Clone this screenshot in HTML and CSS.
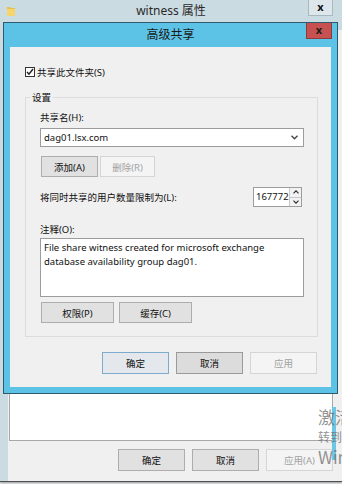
FILE: index.html
```html
<!DOCTYPE html>
<html lang="zh-CN">
<head>
  <meta charset="UTF-8">
  <title>witness 属性 - 高级共享</title>
  <link rel="stylesheet" href="styles.css">
</head>
<body>
  <div class="desktop">
    <!-- parent window: witness properties -->
    <div class="props">
      <div class="props-title">
        <svg class="folder-icon" width="8" height="10" viewBox="0 0 8 10">
          <path d="M0 1h3l1 1h4v8H0z" fill="#e8c04a"/>
          <path d="M0 3h8v7H0z" fill="#f5d66e"/>
        </svg>
        <span>witness 属性</span>
        <div class="props-close">x</div>
      </div>
      <div class="props-body">
        <div class="list-box"></div>
        <div class="btn-row">
          <button class="btn">确定</button>
          <button class="btn">取消</button>
          <button class="btn disabled">应用(A)</button>
        </div>
      </div>
    </div>

    <div class="side-strip"></div>

    <!-- advanced sharing dialog -->
    <div class="share-dlg">
      <div class="dlg-title">高级共享</div>
      <div class="dlg-close">x</div>
      <div class="dlg-client">
        <div class="share-check">
          <span class="checkbox">
            <svg width="8" height="8" viewBox="0 0 8 8"><path d="M1 4l2 2.2L7 1" fill="none" stroke="#222" stroke-width="1.5"/></svg>
          </span>
          <span>共享此文件夹(S)</span>
        </div>

        <div class="group">
          <span class="group-label">设置</span>
          <div class="field-label">共享名(H):</div>
          <div class="combo">
            <span>dag01.lsx.com</span>
            <svg width="7" height="5" viewBox="0 0 7 5"><path d="M0.5 0.8l3 3 3-3" fill="none" stroke="#444" stroke-width="1.3"/></svg>
          </div>
          <div class="small-btns">
            <button class="btn add-btn">添加(A)</button>
            <button class="btn add-btn disabled">删除(R)</button>
          </div>
          <div class="limit-row">
            <span>将同时共享的用户数量限制为(L):</span>
            <div class="spinner">
              <span class="spin-value">167772</span>
              <div class="spin-arrows">
                <span><svg width="6" height="4" viewBox="0 0 6 4"><path d="M0.5 3.3l2.5-2.5 2.5 2.5" fill="none" stroke="#333" stroke-width="1.2"/></svg></span>
                <span><svg width="6" height="4" viewBox="0 0 6 4"><path d="M0.5 0.7l2.5 2.5 2.5-2.5" fill="none" stroke="#333" stroke-width="1.2"/></svg></span>
              </div>
            </div>
          </div>
          <div class="field-label note-label">注释(O):</div>
          <div class="note-box">File share witness created for microsoft exchange database availability group dag01.</div>
          <div class="small-btns">
            <button class="btn perm-btn">权限(P)</button>
            <button class="btn perm-btn">缓存(C)</button>
          </div>
        </div>

        <div class="btn-row dlg-btns">
          <button class="btn default">确定</button>
          <button class="btn pressed">取消</button>
          <button class="btn disabled">应用</button>
        </div>
      </div>
    </div>

    <div class="watermark">
      <div class="wm-big">激活 Windows</div>
      <div class="wm-small">转到“系统”以激活 Windows。</div>
      <div class="wm-big">Windows</div>
    </div>
  </div>
</body>
</html>
```

FILE: styles.css
```css
body {
  margin: 0;
  background: #e9eef0;
  font-family: "Noto Sans", "Noto Sans CJK SC", sans-serif;
  font-size: 9.5px;
  color: #111;
  overflow: hidden;
}
.desktop {
  position: relative;
  width: 342px;
  height: 484px;
  overflow: hidden;
}
.props {
  width: 342px;
  height: 481px;
  background: #cbdbe2;
  border-bottom: 1px solid #4e4e4e;
  box-shadow: 0 1px 2px rgba(0,0,0,0.35);
}
.props-title {
  position: relative;
  height: 30px;
  text-align: center;
  font-size: 12px;
  line-height: 22px;
  color: #2a2a2a;
}
.folder-icon {
  position: absolute;
  left: 7px;
  top: 6px;
}
.props-close {
  position: absolute;
  right: 9px;
  top: 0;
  width: 25px;
  height: 16px;
  box-sizing: border-box;
  border: 1px solid #a9b7be;
  border-top: none;
  background: #dde6ea;
  font-weight: bold;
  font-size: 11px;
  line-height: 14px;
  color: #111;
}
.props-body {
  margin-left: 8px;
  width: 334px;
  height: 451px;
  box-sizing: border-box;
  background: #f0f0f0;
  padding: 10px 9px 0 1px;
}
.list-box {
  height: 401px;
  box-sizing: border-box;
  background: #fff;
  border: 1px solid #a8a8a8;
}
.btn-row {
  display: flex;
  justify-content: flex-end;
  gap: 7px;
  margin-top: 8px;
}
.btn {
  width: 67px;
  height: 22px;
  padding: 0;
  box-sizing: border-box;
  border: 1px solid #adadad;
  background: #e1e1e1;
  font-family: inherit;
  font-size: 9.5px;
  color: #111;
}
.btn.disabled {
  background: #f4f4f4;
  border-color: #d5d5d5;
  color: #a2a2a2;
}
.btn.default {
  border-color: #7eaacb;
  background: #e4e8ec;
}
.btn.pressed {
  border-color: #9a9a9a;
  background: #dcdcdc;
}
.side-strip {
  position: absolute;
  left: 332px;
  top: 407px;
  width: 4px;
  height: 53px;
  background: #6cc6e4;
}

/* advanced sharing dialog */
.share-dlg {
  position: absolute;
  left: 3px;
  top: 22px;
  width: 321px;
  padding: 0 6px 6px;
  border: 1px solid #2f5a6e;
  background: #5dc3e6;
}
.dlg-title {
  height: 24px;
  line-height: 24px;
  text-align: center;
  font-size: 12px;
  color: #1a1a1a;
}
.dlg-close {
  position: absolute;
  right: 5px;
  top: 0;
  width: 26px;
  height: 16px;
  box-sizing: border-box;
  border: 1px solid #8e3b3b;
  border-top: none;
  background: #c75050;
  text-align: center;
  font-weight: bold;
  font-size: 11px;
  line-height: 14px;
  color: #1c1c1c;
}
.dlg-client {
  height: 340px;
  box-sizing: border-box;
  background: #f0f0f0;
  padding: 18px 13px 13px 15px;
}
.share-check {
  display: flex;
  align-items: center;
  gap: 2px;
  height: 14px;
}
.checkbox {
  width: 10px;
  height: 10px;
  box-sizing: border-box;
  border: 1px solid #333;
  background: #fff;
  display: flex;
  align-items: center;
  justify-content: center;
}
.group {
  position: relative;
  margin-top: 18px;
  border: 1px solid #dcdcdc;
  padding: 13px 13px 13px 14px;
}
.group-label {
  position: absolute;
  left: 4px;
  top: -7px;
  padding: 0 2px;
  background: #f0f0f0;
  line-height: 14px;
}
.field-label {
  height: 14px;
  line-height: 14px;
}
.combo {
  margin-top: 3px;
  height: 19px;
  box-sizing: border-box;
  border: 1px solid #9c9c9c;
  background: #fff;
  display: flex;
  align-items: center;
  justify-content: space-between;
  padding: 0 5px 0 3px;
}
.small-btns {
  display: flex;
  gap: 2px;
  margin-top: 9px;
  padding-left: 1px;
}
.add-btn {
  width: 57px;
  height: 21px;
}
.add-btn.disabled {
  width: 55px;
}
.perm-btn {
  width: 73px;
  height: 21px;
}
.small-btns .perm-btn + .perm-btn {
  margin-left: 3px;
}
.limit-row {
  margin-top: 10px;
  height: 20px;
  display: flex;
  align-items: center;
  justify-content: space-between;
}
.spinner {
  width: 49px;
  height: 20px;
  margin-right: 2px;
  box-sizing: border-box;
  border: 1px solid #9c9c9c;
  background: #fff;
  display: flex;
}
.spin-value {
  flex: 1;
  line-height: 18px;
  padding-left: 2px;
}
.spin-arrows {
  width: 12px;
  display: flex;
  flex-direction: column;
}
.spin-arrows span {
  flex: 1;
  border-left: 1px solid #c8c8c8;
  background: #f2f2f2;
  display: flex;
  align-items: center;
  justify-content: center;
}
.spin-arrows span + span {
  border-top: 1px solid #c8c8c8;
}
.note-label {
  margin-top: 16px;
}
.note-box {
  margin-top: 1px;
  height: 59px;
  box-sizing: border-box;
  border: 1px solid #9c9c9c;
  background: #fff;
  padding: 2px 3px;
  line-height: 14px;
}
.note-box + .small-btns {
  margin-top: 5px;
}
.dlg-btns {
  margin-top: 15px;
  margin-right: 1px;
}

.watermark {
  position: absolute;
  left: 318px;
  top: 406px;
  white-space: nowrap;
  color: rgba(110,110,110,0.75);
  font-family: "Noto Sans CJK SC", sans-serif;
}
.wm-big {
  font-size: 17px;
  line-height: 22px;
}
.wm-small {
  font-size: 12px;
  line-height: 18px;
}
```
